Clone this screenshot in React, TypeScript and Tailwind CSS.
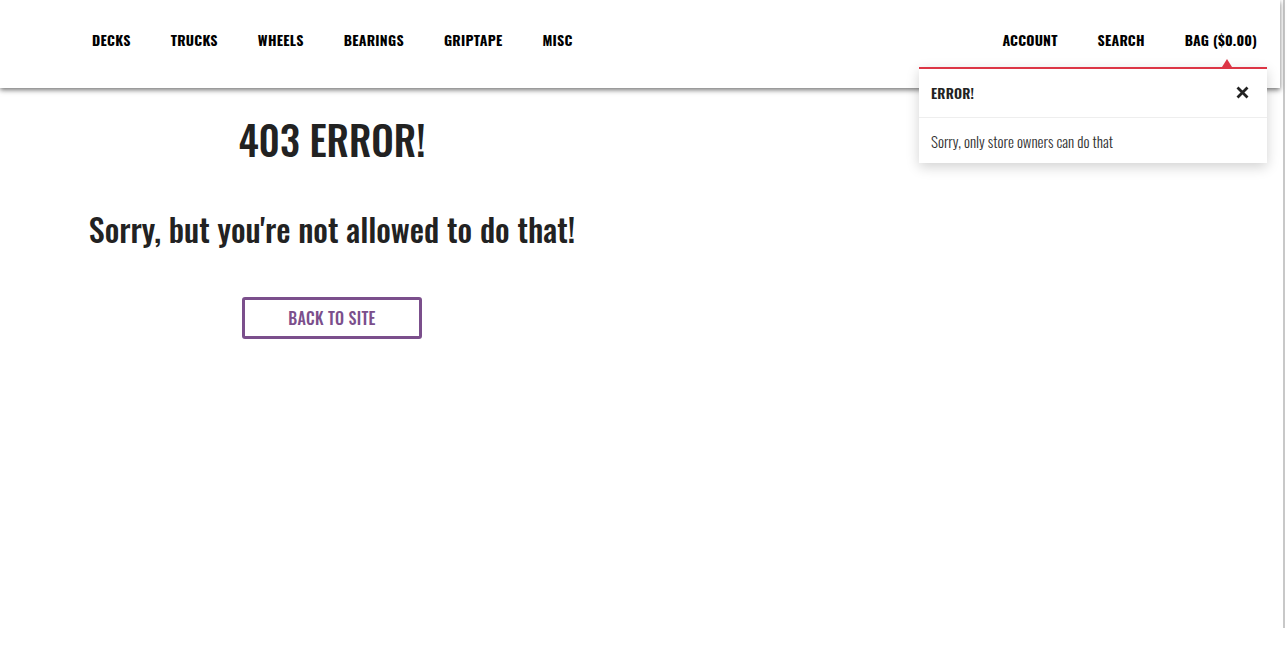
import React from "react";

const font = { fontFamily: 'Oswald, "Roboto Condensed", sans-serif' };

export default function App() {
  const left = ["DECKS", "TRUCKS", "WHEELS", "BEARINGS", "GRIPTAPE", "MISC"];
  const right = ["ACCOUNT", "SEARCH", "BAG ($0.00)"];
  return (
    <div className="relative w-[1287px] h-[653px] bg-white overflow-hidden text-[#222]" style={font}>
      <header className="relative z-10 h-[88px] w-[1280px] bg-white shadow-[0_2px_5px_rgba(0,0,0,0.55)] flex items-center justify-between pl-[92px] pr-[23px]">
        <nav className="flex gap-[40px] pb-[10px]">
          {left.map((t) => (
            <a key={t} className="text-[14px] font-bold tracking-[0.28px] text-black">{t}</a>
          ))}
        </nav>
        <nav className="flex gap-[40px] pb-[10px]">
          {right.map((t) => (
            <a key={t} className="text-[14px] font-bold tracking-[0.2px] text-black">{t}</a>
          ))}
        </nav>
      </header>

      <div className="absolute left-[919px] top-[67px] z-20 w-[348px] bg-white border-t-2 border-[#dc3545] shadow-[0_4px_12px_rgba(0,0,0,0.18)]">
        <div className="absolute -top-[10px] right-[35px] w-0 h-0 border-l-[5px] border-r-[5px] border-b-[8px] border-l-transparent border-r-transparent border-b-[#dc3545]" />
        <div className="flex items-center justify-between h-[49px] px-[12px] pb-[2px] border-b border-[#eeeeee]">
          <span className="text-[14px] font-semibold tracking-[0.2px] text-[#222]">ERROR!</span>
          <svg width="13" height="13" viewBox="0 0 13 13" className="mr-[6px]">
            <path d="M1.5 1.5 L11.5 11.5 M11.5 1.5 L1.5 11.5" stroke="#222" strokeWidth="2.8" strokeLinecap="butt" />
          </svg>
        </div>
        <div className="px-[12px] pt-[12px] pb-[11px] text-[15px] leading-[22px] font-light text-[#333]">Sorry, only store owners can do that</div>
      </div>

      <main className="pl-[87px] w-[577px] flex flex-col items-center text-center">
        <h1 className="mt-[23px] text-[40px] leading-[56px] font-medium text-[#222]">403 ERROR!</h1>
        <h2 className="mt-[42px] text-[32px] leading-[40px] font-medium text-[#222]">Sorry, but you're not allowed to do that!</h2>
        <button className="mt-[48px] w-[180px] h-[42px] border-[3px] border-[#7b4f8c] rounded-[3px] text-[16px] font-medium tracking-[0.3px] text-[#7b4f8c] bg-white">BACK TO SITE</button>
      </main>

      <div className="absolute right-[2px] top-0 h-[628px] w-[2px] bg-[#c8c8c8]" />
    </div>
  );
}
